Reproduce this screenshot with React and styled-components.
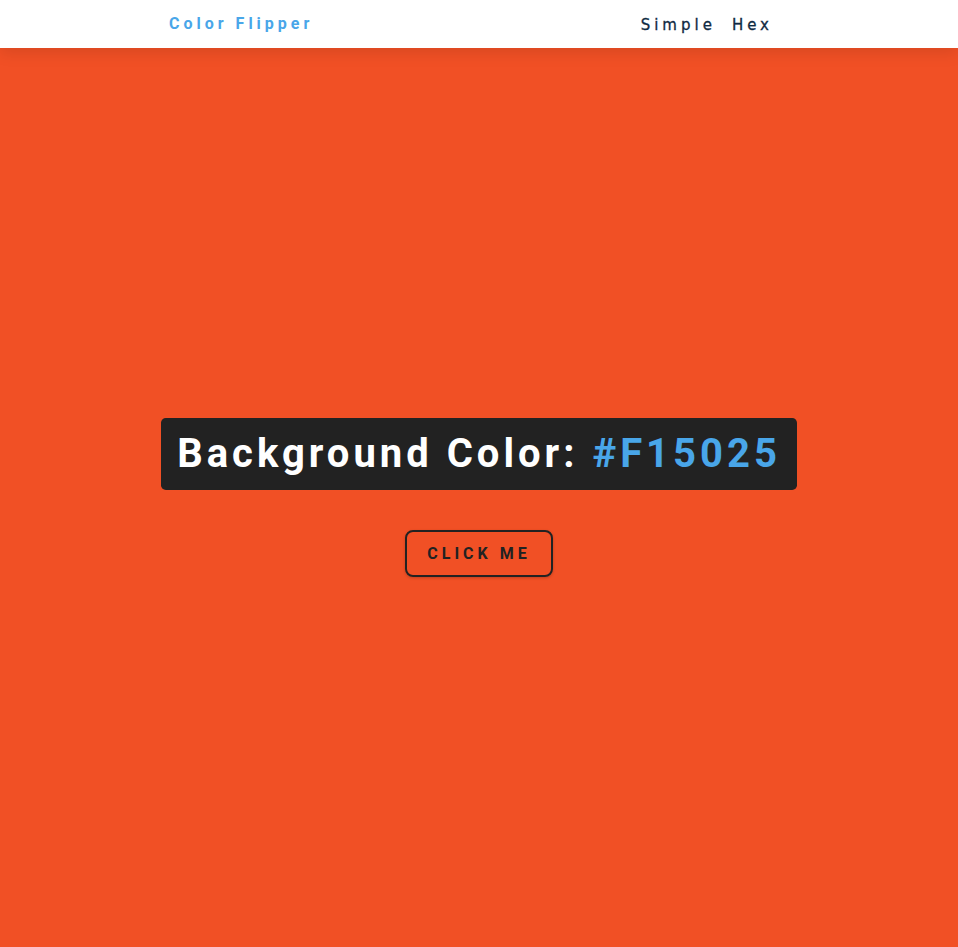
import React, { useState } from "react";
import styled, { createGlobalStyle } from "styled-components";

const GlobalStyle = createGlobalStyle`
    *, *::before, *::after {
        margin: 0;
        padding: 0;
        box-sizing: border-box;
    }
    body {
        font-family: "Open Sans", "Liberation Sans", sans-serif;
        color: #102a42;
        line-height: 1.5;
    }
    ul {
        list-style: none;
    }
    a {
        text-decoration: none;
    }
`;

const Nav = styled.nav`
    background: #fff;
    height: 3rem;
    display: grid;
    align-items: center;
    box-shadow: 0 5px 15px rgba(0, 0, 0, 0.1);
    position: relative;
    z-index: 1;
`;

const NavCenter = styled.div`
    width: 90vw;
    max-width: 620px;
    margin: 0 auto;
    display: flex;
    justify-content: space-between;
    align-items: center;
`;

const Logo = styled.h4`
    font-family: "Roboto", sans-serif;
    font-size: 1rem;
    font-weight: 700;
    letter-spacing: 0.25rem;
    color: #49a6e9;
`;

const Links = styled.ul`
    display: flex;
    margin-right: 0.5rem;
`;

const LinkItem = styled.a`
    margin: 0 0.5rem;
    font-family: "DejaVu Sans", "Open Sans", sans-serif;
    font-size: 15px;
    font-weight: 400;
    letter-spacing: 0.25rem;
    color: #102a42;
    -webkit-text-stroke: 0.3px #102a42;
`;

const Main = styled.main`
    min-height: calc(100vh - 3rem);
    display: grid;
    place-items: center;
    background: ${({ $bg }) => $bg};
`;

const Container = styled.div`
    text-align: center;
`;

const Title = styled.h2`
    font-family: "Roboto", sans-serif;
    font-size: 2.5rem;
    font-weight: 700;
    letter-spacing: 0.25rem;
    line-height: 1.2;
    background: #222;
    color: #fff;
    padding: 0.75rem 1rem;
    border-radius: 0.3rem;
`;

const ColorText = styled.span`
    color: #49a6e9;
`;

const Button = styled.button`
    margin-top: 2.5rem;
    padding: 0.75rem 1.25rem;
    background: transparent;
    border: 2px solid #222;
    border-radius: 0.5rem;
    font-family: "Roboto", sans-serif;
    font-size: 1rem;
    font-weight: 700;
    letter-spacing: 0.25rem;
    text-transform: uppercase;
    color: #222;
    box-shadow: 0 1px 3px rgba(0, 0, 0, 0.2);
    cursor: pointer;
`;

const colors = ["#F15025", "#49A6E9", "#2E8B57", "#9B59B6"];

const App = () => {
    const [color, setColor] = useState("#F15025");

    const changeColor = () => {
        const next = colors[Math.floor(Math.random() * colors.length)];
        setColor(next);
    };

    return (
        <>
            <GlobalStyle />
            <Nav>
                <NavCenter>
                    <Logo>Color Flipper</Logo>
                    <Links>
                        <li>
                            <LinkItem href="#">Simple</LinkItem>
                        </li>
                        <li>
                            <LinkItem href="#">Hex</LinkItem>
                        </li>
                    </Links>
                </NavCenter>
            </Nav>
            <Main $bg={color}>
                <Container>
                    <Title>
                        Background Color: <ColorText>{color}</ColorText>
                    </Title>
                    <Button onClick={changeColor}>Click me</Button>
                </Container>
            </Main>
        </>
    );
};

export default App;
